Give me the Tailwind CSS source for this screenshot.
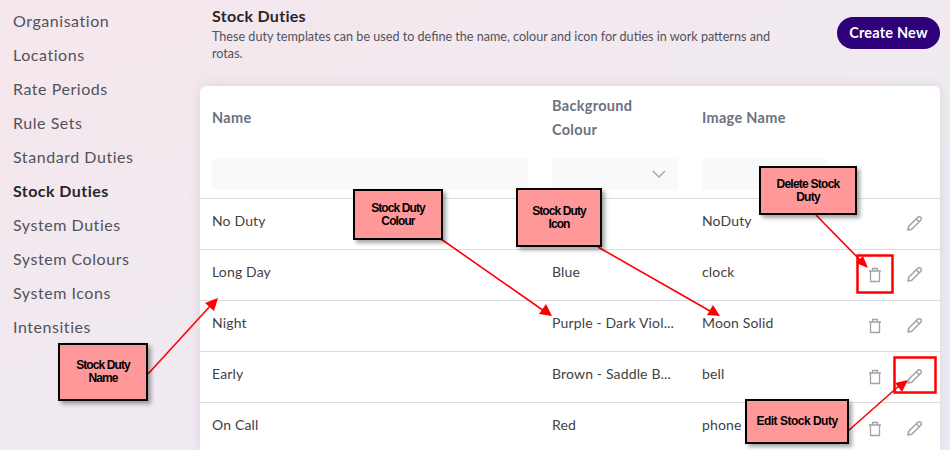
<!DOCTYPE html>
<html lang="en">
<head>
    <meta charset="UTF-8">
    <title>Stock Duties</title>
    <script src="https://cdn.jsdelivr.net/npm/@tailwindcss/browser@4"></script>
</head>
<body class="w-[950px] h-[450px] overflow-hidden relative bg-linear-to-br from-[#f5e7ed] to-[#edecf4] font-['Lato',sans-serif] text-[#3f3f46]">
    <div class="flex items-start h-[450px]">
        <!-- settings nav -->
        <ul class="w-[200px] shrink-0 pl-[13px] pt-[4px] text-[16px] leading-[34px] text-[#52525b] tracking-[0.55px]">
            <li>Organisation</li>
            <li>Locations</li>
            <li>Rate Periods</li>
            <li>Rule Sets</li>
            <li>Standard Duties</li>
            <li class="font-bold text-[#27272a] tracking-[0.45px]">Stock Duties</li>
            <li>System Duties</li>
            <li>System Colours</li>
            <li>System Icons</li>
            <li>Intensities</li>
        </ul>

        <div class="w-[740px] shrink-0">
            <div class="flex justify-between pl-3 h-[86px]">
                <div class="w-[570px] pt-[5px]">
                    <h1 class="text-[16px] leading-[22px] font-bold text-[#27272a] tracking-[0.3px]">Stock Duties</h1>
                    <p class="text-[12.6px] leading-[17px] mt-[1px] text-[#52525b]">These duty templates can be used to define the name, colour and icon for duties in work patterns and rotas.</p>
                </div>
                <button class="h-[32px] w-[103px] mt-[17px] rounded-full bg-[#2e007a] text-white text-[14.5px] font-bold tracking-[0.2px]">Create New</button>
            </div>

            <div class="bg-white rounded-t-md h-[364px] overflow-hidden shadow-[0_0_12px_rgba(120,110,130,0.18)] text-[14px] tracking-[0.15px]">
                <div class="grid grid-cols-[316px_126px_126px] gap-x-6 px-3 h-[72px] pb-2 items-center font-bold text-[14.5px] leading-[24px] text-[#6b7280] tracking-[0.3px]">
                    <div>Name</div>
                    <div class="w-[100px]">Background Colour</div>
                    <div>Image Name</div>
                </div>
                <div class="grid grid-cols-[316px_126px_126px] gap-x-6 px-3 h-[41px] border-b border-[#dcdcdf]">
                    <div class="h-[32px] rounded bg-[#f9f9fa]"></div>
                    <div class="h-[32px] rounded bg-[#f9f9fa] flex items-center justify-end pr-3">
                        <svg width="14" height="8" viewBox="0 0 14 8" fill="none" stroke="#9ca3af" stroke-width="1.4"><path d="M1 1l6 6 6-6"/></svg>
                    </div>
                    <div class="h-[32px] rounded bg-[#f9f9fa]"></div>
                </div>

                <div class="flex items-center px-3 h-[51px] border-b border-[#dcdcdf]">
                    <div class="w-[340px] pb-[8px]">No Duty</div>
                    <div class="w-[150px] pb-[8px]"></div>
                    <div class="flex-1 pb-[8px]">NoDuty</div>
                    <svg class="w-[18px] h-[18px] mr-[5px]" viewBox="0 0 24 24" fill="none" stroke="#a1a1aa" stroke-width="2" stroke-linejoin="round"><path d="M4 20l1-5L17 3a2.2 2.2 0 0 1 4 4L9 19z"/><path d="M15 5l4 4"/></svg>
                </div>
                <div class="flex items-center px-3 h-[51px] border-b border-[#dcdcdf]">
                    <div class="w-[340px] pb-[8px]">Long Day</div>
                    <div class="w-[150px] pb-[8px]">Blue</div>
                    <div class="flex-1 pb-[8px]">clock</div>
                    <svg class="w-[14px] h-4 mr-[23px]" viewBox="0 0 14 16" fill="none" stroke="#a1a1aa" stroke-width="1.3" stroke-linejoin="round"><path d="M1 4h12M4.5 4V1.5h5V4M2.5 4v10.5h9V4"/></svg>
                    <svg class="w-[18px] h-[18px] mr-[5px]" viewBox="0 0 24 24" fill="none" stroke="#a1a1aa" stroke-width="2" stroke-linejoin="round"><path d="M4 20l1-5L17 3a2.2 2.2 0 0 1 4 4L9 19z"/><path d="M15 5l4 4"/></svg>
                </div>
                <div class="flex items-center px-3 h-[51px] border-b border-[#dcdcdf]">
                    <div class="w-[340px] pb-[8px]">Night</div>
                    <div class="w-[150px] pb-[8px]">Purple - Dark Viol...</div>
                    <div class="flex-1 pb-[8px]">Moon Solid</div>
                    <svg class="w-[14px] h-4 mr-[23px]" viewBox="0 0 14 16" fill="none" stroke="#a1a1aa" stroke-width="1.3" stroke-linejoin="round"><path d="M1 4h12M4.5 4V1.5h5V4M2.5 4v10.5h9V4"/></svg>
                    <svg class="w-[18px] h-[18px] mr-[5px]" viewBox="0 0 24 24" fill="none" stroke="#a1a1aa" stroke-width="2" stroke-linejoin="round"><path d="M4 20l1-5L17 3a2.2 2.2 0 0 1 4 4L9 19z"/><path d="M15 5l4 4"/></svg>
                </div>
                <div class="flex items-center px-3 h-[51px] border-b border-[#dcdcdf]">
                    <div class="w-[340px] pb-[8px]">Early</div>
                    <div class="w-[150px] pb-[8px]">Brown - Saddle B...</div>
                    <div class="flex-1 pb-[8px]">bell</div>
                    <svg class="w-[14px] h-4 mr-[23px]" viewBox="0 0 14 16" fill="none" stroke="#a1a1aa" stroke-width="1.3" stroke-linejoin="round"><path d="M1 4h12M4.5 4V1.5h5V4M2.5 4v10.5h9V4"/></svg>
                    <svg class="w-[18px] h-[18px] mr-[5px]" viewBox="0 0 24 24" fill="none" stroke="#a1a1aa" stroke-width="2" stroke-linejoin="round"><path d="M4 20l1-5L17 3a2.2 2.2 0 0 1 4 4L9 19z"/><path d="M15 5l4 4"/></svg>
                </div>
                <div class="flex items-center px-3 h-[51px]">
                    <div class="w-[340px] pb-[8px]">On Call</div>
                    <div class="w-[150px] pb-[8px]">Red</div>
                    <div class="flex-1 pb-[8px]">phone</div>
                    <svg class="w-[14px] h-4 mr-[23px]" viewBox="0 0 14 16" fill="none" stroke="#a1a1aa" stroke-width="1.3" stroke-linejoin="round"><path d="M1 4h12M4.5 4V1.5h5V4M2.5 4v10.5h9V4"/></svg>
                    <svg class="w-[18px] h-[18px] mr-[5px]" viewBox="0 0 24 24" fill="none" stroke="#a1a1aa" stroke-width="2" stroke-linejoin="round"><path d="M4 20l1-5L17 3a2.2 2.2 0 0 1 4 4L9 19z"/><path d="M15 5l4 4"/></svg>
                </div>
            </div>
        </div>
    </div>

    <!-- callouts drawn over the page -->
    <svg class="absolute left-0 top-0 pointer-events-none" width="950" height="450" fill="none" stroke="#ff0000">
        <rect x="857.5" y="255.5" width="35" height="37" stroke-width="2.5"/>
        <rect x="894.5" y="357.5" width="41" height="35" stroke-width="2.5"/>
        <g stroke-width="1.6">
            <path d="M148 374L212 304"/>
            <path d="M441 239L544 311"/>
            <path d="M598 247L710 311"/>
            <path d="M816 215L862 262"/>
            <path d="M848 431L900 385"/>
        </g>
        <g fill="#ff0000" stroke="none">
            <path d="M218 298L214 311L205 303z"/>
            <path d="M552 316L539 314L546 304z"/>
            <path d="M720 316L707 315L713 305z"/>
            <path d="M868 268L856 263L863 256z"/>
            <path d="M908 380L902 392L895 383z"/>
        </g>
    </svg>
    <div class="absolute left-[58px] top-[343px] w-[90px] h-[58px] flex items-center justify-center text-center bg-[#ff9999] border-2 border-black shadow-[3px_3px_4px_rgba(0,0,0,0.35)] font-['Liberation_Sans',sans-serif] font-bold text-[12px] leading-[13px] tracking-[-0.9px] text-black">Stock Duty<br>Name</div>
    <div class="absolute left-[353px] top-[189px] w-[90px] h-[51px] flex items-center justify-center text-center bg-[#ff9999] border-2 border-black shadow-[3px_3px_4px_rgba(0,0,0,0.35)] font-['Liberation_Sans',sans-serif] font-bold text-[12px] leading-[13px] tracking-[-0.9px] text-black">Stock Duty<br>Colour</div>
    <div class="absolute left-[516px] top-[188px] w-[86px] h-[59px] flex items-center justify-center text-center bg-[#ff9999] border-2 border-black shadow-[3px_3px_4px_rgba(0,0,0,0.35)] font-['Liberation_Sans',sans-serif] font-bold text-[12px] leading-[13px] tracking-[-0.9px] text-black">Stock Duty<br>Icon</div>
    <div class="absolute left-[759px] top-[166px] w-[98px] h-[49px] flex items-center justify-center text-center bg-[#ff9999] border-2 border-black shadow-[3px_3px_4px_rgba(0,0,0,0.35)] font-['Liberation_Sans',sans-serif] font-bold text-[12px] leading-[13px] tracking-[-0.75px] text-black">Delete Stock<br>Duty</div>
    <div class="absolute left-[745px] top-[399px] w-[104px] h-[45px] flex items-center justify-center text-center bg-[#ff9999] border-2 border-black shadow-[3px_3px_4px_rgba(0,0,0,0.35)] font-['Liberation_Sans',sans-serif] font-bold text-[12px] leading-[13px] tracking-[-0.5px] text-black">Edit Stock Duty</div>
</body>
</html>
